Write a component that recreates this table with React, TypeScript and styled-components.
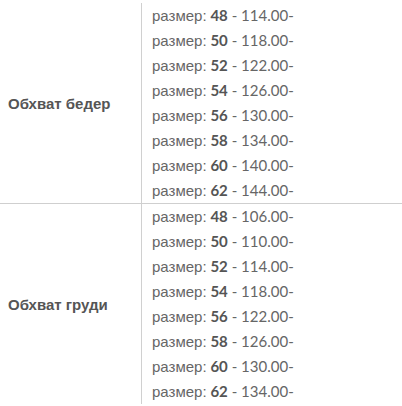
import React from "react";
import styled, { createGlobalStyle } from "styled-components";

const Global = createGlobalStyle`
  html, body { margin: 0; padding: 0; background: #fff; }
  body { font-family: Lato, "Open Sans", sans-serif; font-size: 15px; color: #666; }
`;

const Table = styled.div`
  width: 402px;
  padding-top: 3px;
`;

const Row = styled.div<{ $last?: boolean }>`
  display: grid;
  grid-template-columns: 142px 1fr;
  border-bottom: ${(p) => (p.$last ? "none" : "1px solid #cfcfcf")};
`;

const Label = styled.div`
  display: flex;
  align-items: center;
  padding-left: 8px;
  font-family: "Liberation Sans", Arial, sans-serif;
  font-weight: 700;
  color: #555;
  border-right: 1px solid #d0d0d0;
`;

const Values = styled.div`
  padding-left: 10px;
`;

const Line = styled.div`
  line-height: 25px;
  color: #666;
  white-space: nowrap;
`;

const Cyr = styled.span`
  font-family: "Liberation Sans", Arial, sans-serif;
`;

const Num = styled.b`
  color: #555;
  font-weight: 700;
`;

const sizes = [48, 50, 52, 54, 56, 58, 60, 62];

const data = [
  { label: "Обхват бедер", values: ["114.00", "118.00", "122.00", "126.00", "130.00", "134.00", "140.00", "144.00"] },
  { label: "Обхват груди", values: ["106.00", "110.00", "114.00", "118.00", "122.00", "126.00", "130.00", "134.00"] },
];

export default function App() {
  return (
    <>
      <Global />
      <Table>
        {data.map((r, i) => (
          <Row key={r.label} $last={i === data.length - 1}>
            <Label>{r.label}</Label>
            <Values>
              {sizes.map((s, j) => (
                <Line key={s}>
                  <Cyr>размер:</Cyr> <Num>{s}</Num> - {r.values[j]}-
                </Line>
              ))}
            </Values>
          </Row>
        ))}
      </Table>
    </>
  );
}
